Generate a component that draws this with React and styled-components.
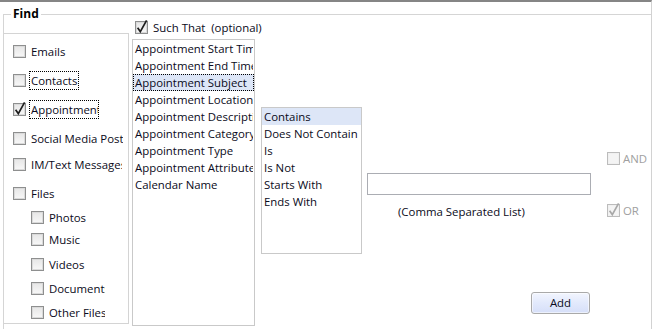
import React from "react";
import styled, { createGlobalStyle } from "styled-components";

const Global = createGlobalStyle`
  html, body { margin: 0; padding: 0; background: #fff; }
  body { font-family: "Open Sans", "Noto Sans", sans-serif; font-size: 11.4px; color: #0a0a20; }
`;

const Frame = styled.div`
  width: 652px;
  height: 329px;
  box-sizing: border-box;
  border-top: 2px solid #858585;
  border-right: 1px solid #d2d2d2;
  padding: 12px 0 0 3px;
  overflow: hidden;
  background: #fff;
`;

const Group = styled.div`
  position: relative;
  height: 420px;
  border-top: 1px solid #d5d5d5;
  border-left: 1px solid #d5d5d5;
  display: flex;
  align-items: flex-start;
  & > * { flex: none; }
`;

const Legend = styled.div`
  position: absolute;
  top: -9px;
  left: 7px;
  padding: 0 2px;
  background: #fff;
  font-weight: 700;
  font-size: 12px;
  line-height: 16px;
  color: #000;
`;

const SidePanel = styled.div`
  width: 125px;
  height: 291px;
  margin-top: 18px;
  box-sizing: border-box;
  border: 1px solid #d4d4d4;
  border-left: none;
  display: flex;
  flex-direction: column;
`;

const Row = styled.div`
  display: flex;
  align-items: center;
  height: ${(p) => p.$h || 19}px;
  margin-top: ${(p) => p.$mt || 0}px;
  padding-left: ${(p) => p.$indent || 0}px;
  gap: ${(p) => (p.$gap === undefined ? 3 : p.$gap)}px;
  white-space: nowrap;
`;

const Box = styled.span`
  position: relative;
  flex: none;
  width: 13px;
  height: 13px;
  box-sizing: border-box;
  border: 1px solid ${(p) => (p.$disabled ? "#bcbcbc" : "#8e8f8f")};
  background: ${(p) => (p.$disabled ? "#f4f4f4" : "linear-gradient(#e6e6e6, #f8f8f8)")};
  box-shadow: inset 0 0 0 1px ${(p) => (p.$disabled ? "#f0f0f0" : "#dadada")};
  svg { position: absolute; left: -1px; top: -1px; overflow: visible; }
`;

const Label = styled.span`
  display: block;
  flex: none;
  box-sizing: border-box;
  ${(p) => (p.$w ? `width: ${p.$w}px;` : "")}
  border: 1px dotted ${(p) => (p.$focus ? "#000" : "transparent")};
  padding: 0 1px;
  line-height: 17px;
  white-space: pre;
  overflow: hidden;
  color: ${(p) => (p.$disabled ? "#a0a0a0" : "#0a0a20")};
`;

const Check = ({ color = "#1e1e1e" }) => (
  <svg width="13" height="13" viewBox="0 0 13 13">
    <path d="M2.6 6.8 L5.3 10.6 L11.6 -0.6" fill="none" stroke={color} strokeWidth="1.7" strokeLinejoin="miter" />
  </svg>
);

const CheckItem = ({ label, checked, focus, w, disabled, ...rest }) => (
  <Row {...rest}>
    <Box $disabled={disabled}>{checked && <Check color={disabled ? "#a8a8a8" : "#1e1e1e"} />}</Box>
    <Label $w={w} $focus={focus} $disabled={disabled}>{label}</Label>
  </Row>
);

const MidColumn = styled.div`
  width: 123px;
  margin-left: 3px;
  margin-top: 6px;
  display: flex;
  flex-direction: column;
`;

const ListBox = styled.div`
  width: ${(p) => p.$w}px;
  height: ${(p) => p.$h}px;
  margin-top: ${(p) => p.$mt || 0}px;
  margin-left: ${(p) => p.$ml || 0}px;
  box-sizing: border-box;
  border: 1px solid #c9c9c9;
  overflow: hidden;
  background: #fff;
  flex: none;
`;

const ListItem = styled.div`
  height: 17px;
  box-sizing: border-box;
  padding: 1px 0 0 1px;
  border: 1px dotted ${(p) => (p.$focus ? "#000" : "transparent")};
  background: ${(p) => (p.$sel ? "#dde6f7" : "transparent")};
  line-height: 14px;
  white-space: nowrap;
  overflow: hidden;
  color: #0a0a20;
`;

const ValueColumn = styled.div`
  width: 224px;
  margin-left: 5px;
  margin-top: 158px;
  display: flex;
  flex-direction: column;
`;

const TextInput = styled.input`
  width: 224px;
  height: 22px;
  box-sizing: border-box;
  border: 1px solid #abadb3;
  margin: 0;
  padding: 0 3px;
  font: inherit;
  outline: none;
`;

const Caption = styled.div`
  margin-top: 9px;
  padding-left: 31px;
  line-height: 16px;
  color: #0a0a20;
`;

const Button = styled.button`
  align-self: flex-end;
  margin: 72px 1px 0 0;
  width: 59px;
  height: 22px;
  box-sizing: border-box;
  border: 1px solid #a9a9a9;
  border-radius: 3px;
  background: linear-gradient(#f2f5fe, #e2e9fc 50%, #d6dff9);
  box-shadow: inset 0 0 0 1px rgba(255, 255, 255, 0.55);
  font: inherit;
  color: #0a0a20;
  padding: 0;
  line-height: 18px;
`;

const ConjColumn = styled.div`
  margin-left: 16px;
  margin-top: 134px;
  display: flex;
  flex-direction: column;
`;

const sideItems = [
  { label: "Emails", mt: 8 },
  { label: "Contacts", mt: 10, focus: true },
  { label: "Appointments", mt: 10, checked: true, focus: true, w: 70 },
  { label: "Social Media Posts", mt: 10, w: 95 },
  { label: "IM/Text Messages", mt: 7, w: 94 },
  { label: "Files", mt: 10 },
  { label: "Photos", mt: 5, sub: true, w: 59 },
  { label: "Music", mt: 3, sub: true, w: 59 },
  { label: "Videos", mt: 6, sub: true, w: 59 },
  { label: "Documents", mt: 5, sub: true, w: 59 },
  { label: "Other Files", mt: 5, sub: true, w: 59 },
];

const fields = [
  "Appointment Start Time",
  "Appointment End Time",
  "Appointment Subject",
  "Appointment Location",
  "Appointment Description",
  "Appointment Category",
  "Appointment Type",
  "Appointment Attributes",
  "Calendar Name",
];

const ops = ["Contains", "Does Not Contain", "Is", "Is Not", "Starts With", "Ends With"];

export default function App() {
  return (
    <>
      <Global />
      <Frame>
        <Group>
          <Legend>Find</Legend>
          <SidePanel>
            {sideItems.map((it) => (
              <CheckItem
                key={it.label}
                label={it.label}
                checked={it.checked}
                focus={it.focus}
                w={it.w}
                $mt={it.mt}
                $indent={it.sub ? 27 : 9}
              />
            ))}
          </SidePanel>
          <MidColumn>
            <CheckItem label={"Such That  (optional)"} checked $h={13} $indent={3} $gap={3} />
            <ListBox $w={123} $h={287} $mt={5}>
              {fields.map((f, i) => (
                <ListItem key={f} $sel={i === 2} $focus={i === 2}>
                  {f}
                </ListItem>
              ))}
            </ListBox>
          </MidColumn>
          <ListBox $w={101} $h={147} $mt={92} $ml={6}>
            {ops.map((o, i) => (
              <ListItem key={o} $sel={i === 0}>
                {o}
              </ListItem>
            ))}
          </ListBox>
          <ValueColumn>
            <TextInput type="text" />
            <Caption>(Comma Separated List)</Caption>
            <Button>Add</Button>
          </ValueColumn>
          <ConjColumn>
            <CheckItem label="AND" disabled $gap={1} />
            <CheckItem label="OR" checked disabled $gap={1} $mt={33} />
          </ConjColumn>
        </Group>
      </Frame>
    </>
  );
}
